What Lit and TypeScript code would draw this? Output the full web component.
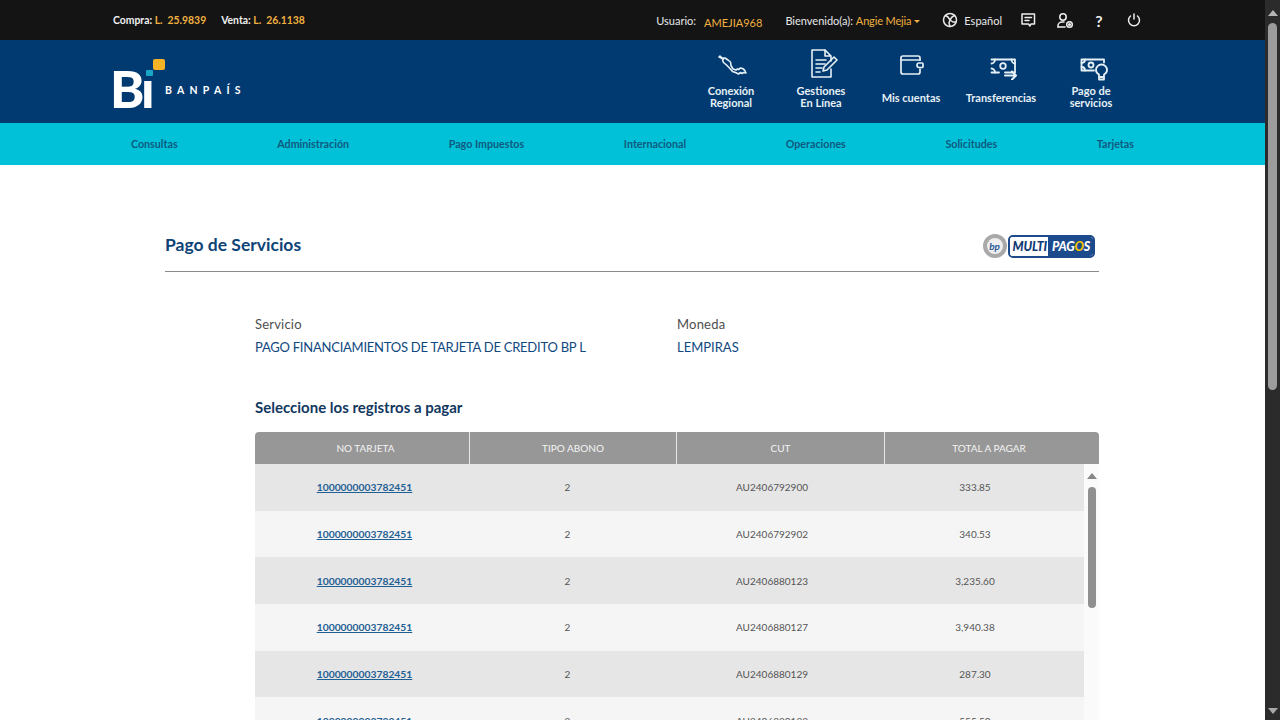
import { LitElement, html, css, svg } from "lit";
import { customElement } from "lit/decorators.js";

const rows = [
  ["AU2406792900", "333.85"],
  ["AU2406792902", "340.53"],
  ["AU2406880123", "3,235.60"],
  ["AU2406880127", "3,940.38"],
  ["AU2406880129", "287.30"],
  ["AU2406880133", "555.50"],
];

const stroke = (w: number, h: number, content: unknown, sw = 1.5) => html`<svg width=${w} height=${h} viewBox="0 0 ${w} ${h}" fill="none" stroke="currentColor" stroke-width=${sw} stroke-linecap="round" stroke-linejoin="round">${content}</svg>`;

const icons = {
  globe: stroke(16, 16, svg`<circle cx="8" cy="8" r="6.5"/><path d="M3.500 3.500L6 5l2 3 2-3 2.500-1.500M8 8l-1 3 1 3.500M8 8l3 2 2.500 0"/>`),
  chat: stroke(16, 16, svg`<path d="M2 2h12.500v10H11l-1 2-1.500-2H2z"/><path d="M5 5.500h6.500M5 8.500h4"/>`),
  user: stroke(18, 17, svg`<circle cx="7" cy="5" r="3.200"/><path d="M2 15v-1.500c0-2 2-3.500 4-3.500h2"/><path d="M2 15h7"/><circle cx="13.500" cy="12.500" r="2.800"/><circle cx="13.500" cy="12.500" r=".8"/>`),
  power: stroke(14, 14, svg`<path d="M7 1v5"/><path d="M3.500 3a5.500 5.500 0 1 0 7 0"/>`),
  map: stroke(32, 22, svg`<path d="M3 2l1-1 2 2 3 0 3 2 2.500 2 .5 3.500 2 3.500 3 1 1.500-1 1 .5 2-1.500 2 .5 2 1.500 1.500 3-2.500-.5-1.500 1-1.500-1-2 1.500-3-1.500-3-1-3-3.500-3-3-3-2.500-1-2.500 1-1z"/>`, 1.6),
  doc: stroke(30, 30, svg`<path d="M15 1H2v27h19v-8"/><path d="M15 1l6 6v5M15 1v6h6M6 11h10M6 15h9M6 19h6M6 23h4"/><path d="M13 22l1-4 10-10 3 3-10 10z"/>`, 1.6),
  wallet: stroke(24, 21, svg`<path d="M20 5V3c0-1-1-2-2-2H3C2 1 1 2 1 3v14c0 1 1 2 2 2h15c1 0 2-1 2-2v-3"/><path d="M1 5h19"/><path d="M19 8h3c.5 0 1 .5 1 1v2.500c0 .5-.5 1-1 1h-3c-1.500 0-2-1-2-2.200S17.500 8 19 8z"/>`, 1.7),
  money: stroke(27, 22, svg`<path d="M1.500 1.500H25v13H15M9 14.500H1.500z"/><path d="M1.500 5.500c2 0 3.500-2 3.500-4M25 5.500c-2 0-3.500-2-3.500-4M1.500 10.500c2 0 3.500 2 3.500 4"/><circle cx="13" cy="8" r="2.800"/><path d="M15 17.500h10.500M22 13.500l4 4-4 4" stroke-width="2"/>`, 1.8),
  pay: stroke(28, 23, svg`<path d="M14 12.500H1.500V1.500H24v3"/><path d="M1.500 5c2 0 3.500-1.500 3.500-3.500M1.500 9c2 0 3.500 1.500 3.500 3.500"/><circle cx="11" cy="7" r="2.500"/><path d="M19 16.500c-2-1-3-2.800-3-4.500a5.500 5.500 0 0 1 11 0c0 1.700-1 3.500-3 4.500v5h-5zM19 19h5"/>`, 1.8),
};

@customElement("app-root")
export class AppRoot extends LitElement {
  static styles = css`
    :host { display: block; height: 720px; overflow: hidden; font-family: Lato, "Open Sans", sans-serif; color: #4a4a4a; }
    * { box-sizing: border-box; }
    .shell { display: flex; height: 720px; }
    .page { flex: 1; min-width: 0; overflow: hidden; background: #fff; }
    .track { width: 15px; background: #2b2b2b; display: flex; flex-direction: column; align-items: center; padding-top: 10px; position: relative; }
    .arrow-up { width: 0; height: 0; border: 5px solid transparent; border-top: 0; border-bottom: 6px solid #b4b4b4; }
    .track .thumb { width: 9px; height: 367px; margin-top: 7px; border-radius: 5px; background: #9c9c9c; }
    .track .arrow-down { position: absolute; bottom: 6px; width: 0; height: 0; border: 5px solid transparent; border-bottom: 0; border-top: 6px solid #a8a8a8; }

    .top { height: 40px; background: #141414; color: #e8e8e8; font-size: 11px; display: flex; align-items: center; padding: 0 113px; }
    .rates { display: flex; gap: 15px; font-weight: 700; font-size: 10.4px; color: #f0f0f0; }
    .gold { color: #f0b040; }
    .spacer { flex: 1; }
    .user { margin-right: 23px; display: flex; gap: 8px; }
    .user .gold { position: relative; top: 2px; }
    .welcome { margin-right: 22px; }
    .welcome .gold { letter-spacing: -.15px; }
    .caret { display: inline-block; width: 0; height: 0; border: 3px solid transparent; border-bottom: 0; border-top: 3px solid #f0b040; margin: 0 0 2px 3px; }
    .lang { display: flex; align-items: center; gap: 6px; margin-right: 8px; }
    .tools { display: flex; align-items: center; }
    .tools span { width: 36px; display: flex; justify-content: center; color: #eee; }
    .t1 { margin-right: 1px; }
    .t2 { margin-right: -2px; }
    .t3 { margin-right: -1px; font-size: 16px; font-weight: 700; }

    .head { height: 83px; background: #003a70; display: flex; align-items: center; justify-content: space-between; padding: 0 129px 0 113px; color: #e6f0f6; }
    .logo { display: flex; align-items: flex-end; }
    .mark { position: relative; width: 52px; height: 46px; color: #fff; }
    .mark b { position: absolute; left: -3px; bottom: -9px; font: 900 52px/52px Lato, sans-serif; letter-spacing: -3px; }
    .mark i { position: absolute; }
    .sq1 { left: 40px; top: 0; width: 12px; height: 11px; border-radius: 2px; background: #f5b325; }
    .sq2 { left: 33px; top: 11px; width: 7px; height: 6px; border-radius: 1px; background: #18a6c8; }
    .brand { font-size: 10.5px; font-weight: 700; letter-spacing: 5.2px; margin: 0 0 9px 0; color: #fff; }
    .links { display: flex; }
    .link { width: 90px; height: 83px; display: flex; flex-direction: column; align-items: center; padding-bottom: 13px; font-size: 11px; line-height: 12px; font-weight: 700; text-align: center; }
    .ico { flex: 1; display: flex; align-items: flex-start; justify-content: center; }
    .i-map { padding-top: 15px; padding-left: 1px; }
    .i-doc { padding-top: 9px; padding-left: 7px; }
    .i-wallet { padding-top: 15px; padding-left: 1px; }
    .i-money { padding-top: 18px; padding-left: 4px; }
    .i-pay { padding-top: 18px; padding-left: 5px; }
    .cap { height: 24px; display: flex; align-items: center; justify-content: center; }
    .two { padding-bottom: 2px; }

    .nav { height: 42px; background: #00c1d8; display: flex; justify-content: space-between; align-items: center; padding: 0 131px 2px; color: #0f5a80; font-size: 10.7px; font-weight: 700; }

    .content { padding: 0 166px 0 165px; }
    .title-row { height: 107px; display: flex; justify-content: space-between; align-items: flex-end; border-bottom: 1px solid #8a8a8a; padding-bottom: 12px; }
    h1 { margin: 0 0 4px; font-size: 17.5px; font-weight: 700; color: #0d4377; }
    .mp { display: flex; align-items: center; margin: 0 4px 0 0; height: 26px; }
    .mp .seal { width: 24px; height: 24px; border-radius: 50%; border: 4px solid #a9a9a9; color: #2b5c9a; font: italic 700 10px/16px Lato, sans-serif; text-align: center; background: #eee; z-index: 1; margin-right: 1px; }
    .mp .pill { display: flex; height: 23px; border: 2px solid #1c4a8c; border-radius: 5px; overflow: hidden; font: italic 900 12.500px/19px Lato, sans-serif; letter-spacing: -.2px; }
    .mp .w { padding: 0 1px 0 3px; background: #fff; color: #123a75; }
    .mp .b { padding: 0 3px 0 4px; background: #1c4a8c; color: #fff; }
    .mp .b em { color: #f2c200; }

    .body { padding-left: 90px; }
    .info { display: grid; grid-template-columns: 422px 1fr; margin-top: 42px; font-size: 13px; line-height: 20px; }
    .label { color: #4e4e4e; letter-spacing: .2px; }
    .val { color: #0f4880; margin-top: 3px; }
    .tight { letter-spacing: -.24px; }
    h2 { margin: 40px 0 15px; font-size: 15px; line-height: 20px; font-weight: 700; color: #12385f; }
    .thead { display: grid; grid-template-columns: 214px 1px 206px 1px 207px 1px 1fr; height: 32px; background: #979797; border-radius: 4px 4px 0 0; color: #f4f4f4; font-size: 10px; text-align: center; line-height: 32px; }
    .thead s { background: #e8e8e8; text-decoration: none; }
    .h1c { padding-left: 7px; }
    .h4c { padding-right: 6px; }
    .tbody { display: flex; }
    .rows { width: 829px; }
    .row { display: grid; grid-template-columns: 219px 187px 222px 184px; height: 46.67px; align-items: center; text-align: center; font-size: 10px; color: #555; }
    .row:nth-child(odd) { background: #e6e6e6; }
    .row:nth-child(even) { background: #f5f5f5; }
    .row a { color: #1e6094; text-decoration: underline; font-size: 10.300px; font-weight: 700; }
    .sb { width: 15px; background: #fafafa; display: flex; flex-direction: column; align-items: center; padding-top: 9px; }
    .sb .u { width: 0; height: 0; border: 5px solid transparent; border-top: 0; border-bottom: 6px solid #868686; }
    .sb .t { width: 8px; height: 121px; margin-top: 8px; border-radius: 4px; background: #8f8f8f; }
  `;

  render() {
    return html`<div class="shell">
      <div class="page">
        <div class="top">
          <div class="rates">
            <span>Compra: <span class="gold">L. &nbsp;25.9839</span></span>
            <span>Venta: <span class="gold">L. &nbsp;26.1138</span></span>
          </div>
          <div class="spacer"></div>
          <div class="user"><span>Usuario:</span><span class="gold">AMEJIA968</span></div>
          <div class="welcome">Bienvenido(a): <span class="gold">Angie Mejia</span><i class="caret"></i></div>
          <div class="lang">${icons.globe}<span>Español</span></div>
          <div class="tools">
            <span class="t1">${icons.chat}</span><span class="t2">${icons.user}</span><span class="t3">?</span><span>${icons.power}</span>
          </div>
        </div>
        <div class="head">
          <div class="logo">
            <div class="mark"><b>Bı</b><i class="sq1"></i><i class="sq2"></i></div>
            <div class="brand">BANPAÍS</div>
          </div>
          <div class="links">
            <div class="link"><div class="ico i-map">${icons.map}</div><div class="cap two">Conexión<br />Regional</div></div>
            <div class="link"><div class="ico i-doc">${icons.doc}</div><div class="cap two">Gestiones<br />En Línea</div></div>
            <div class="link"><div class="ico i-wallet">${icons.wallet}</div><div class="cap">Mis cuentas</div></div>
            <div class="link"><div class="ico i-money">${icons.money}</div><div class="cap">Transferencias</div></div>
            <div class="link"><div class="ico i-pay">${icons.pay}</div><div class="cap two">Pago de<br />servicios</div></div>
          </div>
        </div>
        <div class="nav">
          <span>Consultas</span><span>Administración</span><span>Pago Impuestos</span><span>Internacional</span><span>Operaciones</span><span>Solicitudes</span><span>Tarjetas</span>
        </div>
        <div class="content">
          <div class="title-row">
            <h1>Pago de Servicios</h1>
            <div class="mp"><span class="seal">bp</span><div class="pill"><span class="w">MULTI</span><span class="b">PAG<em>O</em>S</span></div></div>
          </div>
          <div class="body">
            <div class="info">
              <div><div class="label">Servicio</div><div class="val tight">PAGO FINANCIAMIENTOS DE TARJETA DE CREDITO BP L</div></div>
              <div><div class="label">Moneda</div><div class="val">LEMPIRAS</div></div>
            </div>
            <h2>Seleccione los registros a pagar</h2>
            <div class="thead"><span class="h1c">NO TARJETA</span><s></s><span>TIPO ABONO</span><s></s><span>CUT</span><s></s><span class="h4c">TOTAL A PAGAR</span></div>
            <div class="tbody">
              <div class="rows">
                ${rows.map((r) => html`<div class="row"><span><a>1000000003782451</a></span><span>2</span><span>${r[0]}</span><span>${r[1]}</span></div>`)}
              </div>
              <div class="sb"><i class="u"></i><i class="t"></i></div>
            </div>
          </div>
        </div>
      </div>
      <div class="track"><i class="arrow-up"></i><i class="thumb"></i><i class="arrow-down"></i></div>
    </div>`;
  }
}
